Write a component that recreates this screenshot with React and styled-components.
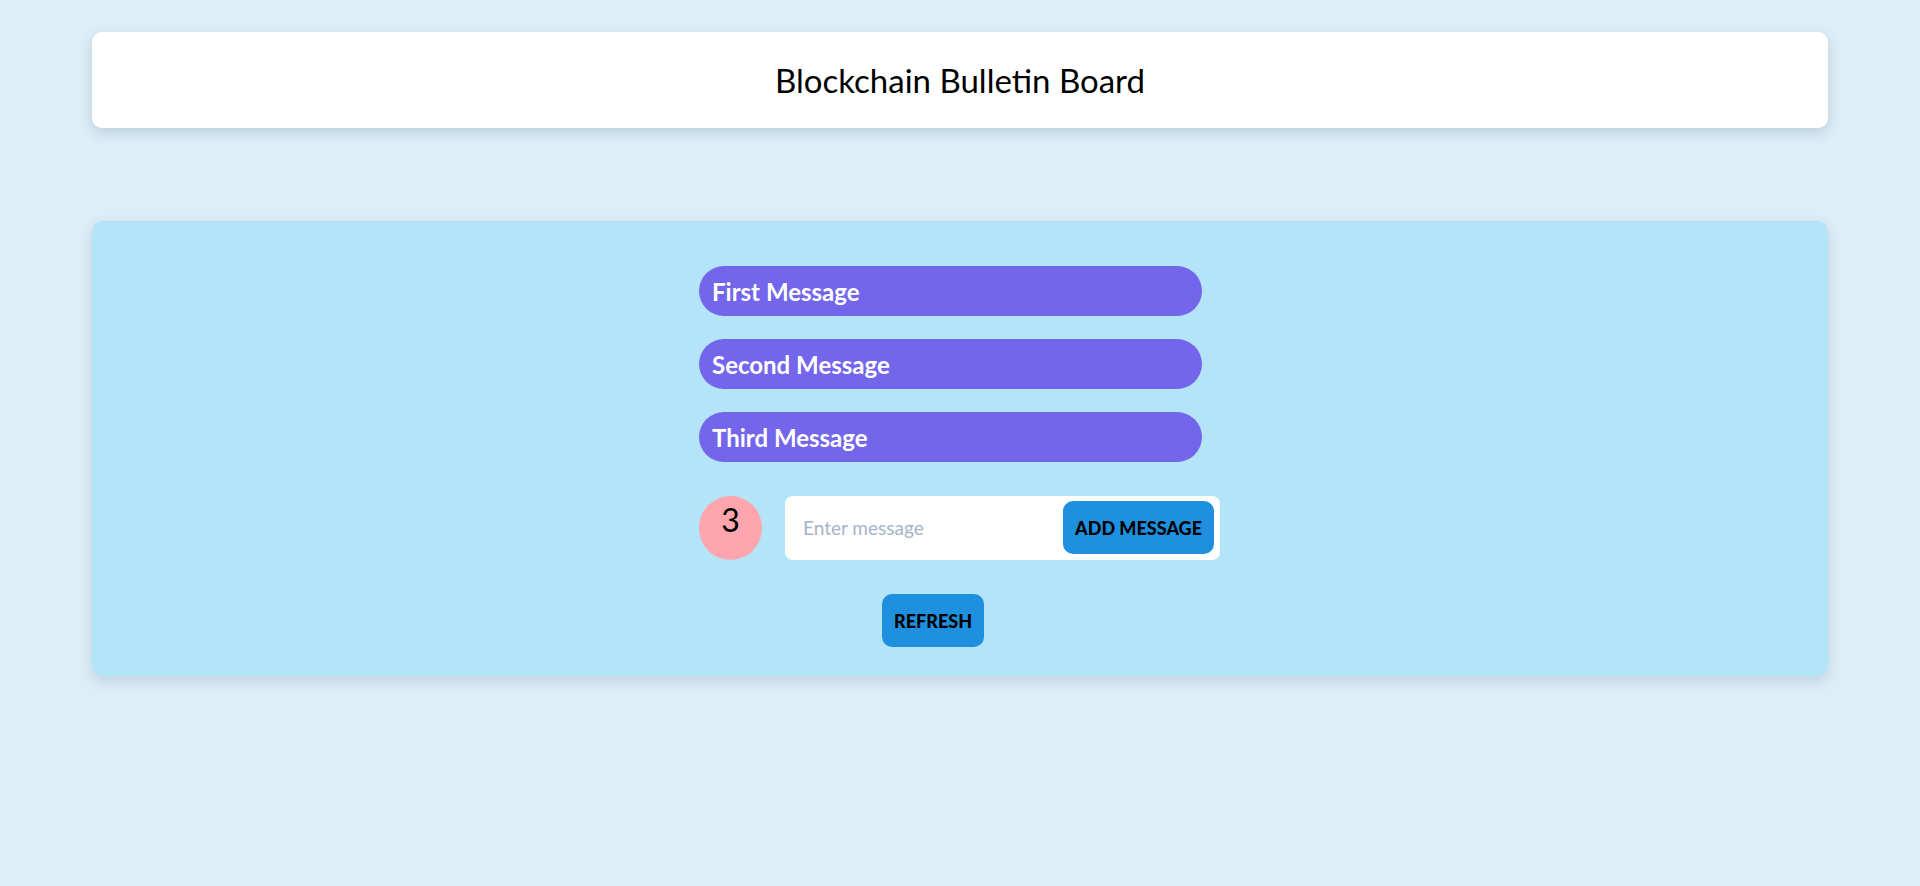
import styled, { createGlobalStyle } from "styled-components";

const GlobalStyle = createGlobalStyle`
  body {
    margin: 0;
    background: #ddeef8;
    font-family: Lato, "Open Sans", sans-serif;
  }
`;

const Page = styled.div`
  padding: 32px 92px;
  display: flex;
  flex-direction: column;
  gap: 93px;
`;

const Header = styled.header`
  height: 96px;
  background: #fff;
  border-radius: 10px;
  box-shadow: 0 5px 14px rgba(40, 70, 100, 0.18);
  display: flex;
  align-items: center;
  justify-content: center;
`;

const Title = styled.h1`
  margin: 0;
  font-size: 33px;
  font-weight: 400;
  color: #000;
`;

const Panel = styled.main`
  background: #b3e4f7;
  border-radius: 10px;
  box-shadow: 0 5px 14px rgba(40, 70, 100, 0.16);
  padding: 45px 0 29px;
  display: flex;
  justify-content: center;
`;

const Column = styled.div`
  width: 522px;
  display: flex;
  flex-direction: column;
`;

const MessageList = styled.ul`
  list-style: none;
  margin: 0;
  padding: 0;
  width: 503px;
  display: flex;
  flex-direction: column;
  gap: 23px;
`;

const Message = styled.li`
  height: 50px;
  background: #7366ea;
  border-radius: 25px;
  padding: 0 13px;
  display: flex;
  align-items: center;
  color: #fff;
  font-size: 24px;
  font-weight: 700;
`;

const Row = styled.div`
  margin-top: 34px;
  display: flex;
  align-items: center;
  gap: 23px;
`;

const Count = styled.div`
  width: 63px;
  height: 64px;
  flex-shrink: 0;
  border-radius: 50%;
  background: #ffa5ad;
  display: flex;
  justify-content: center;
  padding-top: 8px;
  box-sizing: border-box;
  font-size: 32px;
  line-height: 1;
  color: #000;
`;

const InputBox = styled.form`
  width: 435px;
  height: 64px;
  box-sizing: border-box;
  background: #fff;
  border-radius: 8px;
  padding: 5px 6px 6px 18px;
  display: flex;
  align-items: center;
  gap: 8px;
`;

const Input = styled.input`
  flex: 1;
  min-width: 0;
  border: none;
  outline: none;
  padding: 0;
  background: transparent;
  font-family: inherit;
  font-size: 19px;
  color: #333;
  &::placeholder {
    color: #a5b4c8;
  }
`;

const Button = styled.button`
  height: 53px;
  padding: 0 12px;
  border: none;
  border-radius: 10px;
  background: #1f90e0;
  color: #000;
  font-family: inherit;
  font-size: 18px;
  font-weight: 900;
  text-transform: uppercase;
  cursor: pointer;
`;

const RefreshWrap = styled.div`
  margin-top: 34px;
  padding-left: 183px;
`;

const messages = ["First Message", "Second Message", "Third Message"];

export default function App() {
  return (
    <>
      <GlobalStyle />
      <Page>
        <Header>
          <Title>Blockchain Bulletin Board</Title>
        </Header>
        <Panel>
          <Column>
            <MessageList>
              {messages.map((m) => (
                <Message key={m}>{m}</Message>
              ))}
            </MessageList>
            <Row>
              <Count>{messages.length}</Count>
              <InputBox onSubmit={(e) => e.preventDefault()}>
                <Input placeholder="Enter message" />
                <Button>Add Message</Button>
              </InputBox>
            </Row>
            <RefreshWrap>
              <Button>Refresh</Button>
            </RefreshWrap>
          </Column>
        </Panel>
      </Page>
    </>
  );
}
